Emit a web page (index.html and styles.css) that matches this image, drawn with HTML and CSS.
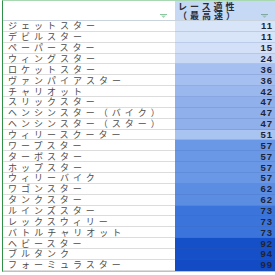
FILE: index.html
```html
<!DOCTYPE html>
<html lang="ja">
<head>
<meta charset="utf-8">
<link rel="stylesheet" href="styles.css">
</head>
<body>
<div class="sheet">
  <div class="hcell hname">
    <svg class="filter" width="7" height="4" viewBox="0 0 7 4"><rect x="0" y="0" width="7" height="1" fill="#8cc7a0"/><path d="M1 1.5 H6 L3.5 4 Z" fill="#a9d3b6"/></svg>
  </div>
  <div class="hcell hval">
    <div class="htext"><span>レース適性</span><span>（最高速）</span></div>
    <svg class="filter" width="7" height="4" viewBox="0 0 7 4"><rect x="0" y="0" width="7" height="1" fill="#7fa8a0"/><path d="M1 1.5 H6 L3.5 4 Z" fill="#9dbfc0"/></svg>
  </div>
  <div class="name">ジェットスター</div><div class="val v11">11</div>
  <div class="name">デビルスター</div><div class="val v11">11</div>
  <div class="name">ペーパースター</div><div class="val v15">15</div>
  <div class="name">ウィングスター</div><div class="val v24">24</div>
  <div class="name">ロケットスター</div><div class="val v36">36</div>
  <div class="name">ヴァンパイアスター</div><div class="val v36">36</div>
  <div class="name">チャリオット</div><div class="val v42">42</div>
  <div class="name">スリックスター</div><div class="val v47">47</div>
  <div class="name">ヘンシンスター（バイク）</div><div class="val v47">47</div>
  <div class="name">ヘンシンスター（スター）</div><div class="val v47">47</div>
  <div class="name">ウィリースクーター</div><div class="val v51">51</div>
  <div class="name">ワープスター</div><div class="val v57">57</div>
  <div class="name">ターボスター</div><div class="val v57">57</div>
  <div class="name">ホップスター</div><div class="val v57">57</div>
  <div class="name">ウィリーバイク</div><div class="val v57">57</div>
  <div class="name">ワゴンスター</div><div class="val v62">62</div>
  <div class="name">タンクスター</div><div class="val v62">62</div>
  <div class="name">ルインズスター</div><div class="val v73">73</div>
  <div class="name">レックスウィリー</div><div class="val v73">73</div>
  <div class="name">バトルチャリオット</div><div class="val v73">73</div>
  <div class="name">ヘビースター</div><div class="val v92">92</div>
  <div class="name">ブルタンク</div><div class="val v94">94</div>
  <div class="name">フォーミュラスター</div><div class="val v99">99</div>
</div>
</body>
</html>
```
FILE: styles.css
```css
html, body {
  margin: 0;
  padding: 0;
  background: #ffffff;
  width: 275px;
  height: 275px;
  overflow: hidden;
}
.sheet {
  margin-left: 2px;
  width: 273px;
  display: grid;
  grid-template-columns: 172px 101px;
  grid-template-rows: 20px repeat(23, 10.87px);
  border-top: 1px solid #a8d8b2;
  border-left: 1px solid #2f8f46;
  border-bottom: 1px solid #a8cfb0;
  font-family: "Noto Sans CJK JP", "Noto Sans", sans-serif;
}
.hcell {
  position: relative;
  border-bottom: 1px solid #c9d3de;
  box-sizing: border-box;
}
.hname {
  background: #ffffff;
}
.hval {
  background: #c5d8f4;
}
.htext {
  display: flex;
  flex-direction: column;
  font-size: 9px;
  line-height: 9px;
  font-weight: bold;
  color: #2b2b36;
  letter-spacing: 3px;
  padding: 1px 0 0 3px;
  white-space: nowrap;
}
.htext span {
  height: 9px;
}
.filter {
  position: absolute;
  right: 8px;
  top: 13px;
}
.name {
  display: flex;
  align-items: center;
  font-size: 9px;
  line-height: 9px;
  color: #4c4c4c;
  letter-spacing: 4px;
  padding-left: 5px;
  white-space: nowrap;
  border-bottom: 1px solid #dcdcdc;
  box-sizing: border-box;
}
.val {
  display: flex;
  align-items: center;
  justify-content: flex-end;
  font-family: "Liberation Sans", Arial, sans-serif;
  font-size: 9.5px;
  line-height: 9px;
  font-weight: bold;
  color: #1e2433;
  letter-spacing: 1px;
  padding-right: 3px;
  border-bottom: 1px solid rgba(60, 90, 160, 0.18);
  box-sizing: border-box;
}
.v11 { background: #d8e4f8; }
.v15 { background: #d3e0f7; }
.v24 { background: #c9d9f5; }
.v36 { background: #a5bff0; }
.v42 { background: #9bb8ee; }
.v47 { background: #90b0ec; }
.v51 { background: #a9c4f0; }
.v57 { background: #6a98e6; }
.v62 { background: #5b8de3; }
.v73 { background: #3b75dc; }
.v92 { background: #1650c9; }
.v94 { background: #1650c9; }
.v99 { background: #124bc3; }
```
